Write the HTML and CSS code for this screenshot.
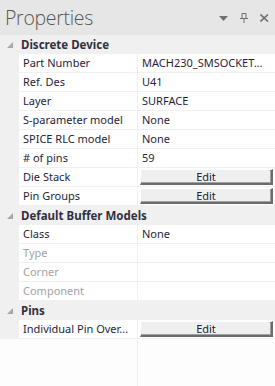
FILE: index.html
```html
<!DOCTYPE html>
<html>
<head>
	<title>Properties</title>
	<link rel="stylesheet" href="styles.css">
</head>
<body>
	<div class="panel">
		<div class="titlebar">
			<span class="title">Properties</span>
			<div class="tools">
				<svg class="tool-menu" width="10" height="6" viewBox="0 0 10 6"><path d="M0 0H9L4.5 5Z" fill="#717171"/></svg>
				<svg class="tool-pin" width="9" height="10" viewBox="0 0 9 10"><path d="M2 0.5H6V5.5M2 0.5V5.5M0 5.5H8M4 5.5V10" stroke="#717171" stroke-width="1" fill="none"/></svg>
				<svg class="tool-close" width="9" height="8" viewBox="0 0 9 8"><path d="M0.5 0.5L8 7.5M8 0.5L0.5 7.5" stroke="#717171" stroke-width="1.6"/></svg>
			</div>
		</div>

		<div class="grid">
			<div class="section">
				<svg class="toggle" width="6" height="6" viewBox="0 0 6 6"><path d="M6 0V6H0Z" fill="#a8a8a8"/></svg>
				<span>Discrete Device</span>
			</div>
			<div class="row"><div class="name">Part Number</div><div class="value">MACH230_SMSOCKET...</div></div>
			<div class="row"><div class="name">Ref. Des</div><div class="value">U41</div></div>
			<div class="row"><div class="name">Layer</div><div class="value">SURFACE</div></div>
			<div class="row"><div class="name">S-parameter model</div><div class="value">None</div></div>
			<div class="row"><div class="name">SPICE RLC model</div><div class="value">None</div></div>
			<div class="row"><div class="name"># of pins</div><div class="value">59</div></div>
			<div class="row"><div class="name">Die Stack</div><div class="value"><button class="edit">Edit</button></div></div>
			<div class="row"><div class="name">Pin Groups</div><div class="value"><button class="edit">Edit</button></div></div>

			<div class="section">
				<svg class="toggle" width="6" height="6" viewBox="0 0 6 6"><path d="M6 0V6H0Z" fill="#a8a8a8"/></svg>
				<span>Default Buffer Models</span>
			</div>
			<div class="row"><div class="name">Class</div><div class="value">None</div></div>
			<div class="row"><div class="name disabled">Type</div><div class="value"></div></div>
			<div class="row"><div class="name disabled">Corner</div><div class="value"></div></div>
			<div class="row"><div class="name disabled">Component</div><div class="value"></div></div>

			<div class="section">
				<svg class="toggle" width="6" height="6" viewBox="0 0 6 6"><path d="M6 0V6H0Z" fill="#a8a8a8"/></svg>
				<span>Pins</span>
			</div>
			<div class="row"><div class="name">Individual Pin Over...</div><div class="value"><button class="edit">Edit</button></div></div>
		</div>
		<div class="filler"></div>
	</div>
</body>
</html>
```

FILE: styles.css
```css
* {
	box-sizing: border-box;
}

body {
	margin: 0;
	background-color: #fdfdfd;
	font-family: "Noto Sans", "Liberation Sans", sans-serif;
	font-size: 11px;
	color: #1e1e38;
}

.panel {
	width: 275px;
	height: 386px;
	overflow: hidden;
}

.titlebar {
	height: 35px;
	background-color: #e6e6e6;
	display: flex;
	align-items: center;
	justify-content: space-between;
	padding: 0 6px 1px 5px;
}

.title {
	font-family: "Open Sans", "Noto Sans", sans-serif;
	font-weight: 300;
	font-size: 19.5px;
	color: #555555;
	letter-spacing: -0.3px;
}

.tools {
	display: flex;
	align-items: center;
	gap: 11px;
	padding-top: 1px;
}

.tool-menu {
	margin-top: 2px;
}

.grid {
	background-color: #f0f0f0;
}

.section {
	height: 19px;
	display: flex;
	align-items: center;
	font-weight: bold;
	font-size: 11.5px;
	color: #303040;
}

.toggle {
	margin: 1px 8px 0 7px;
}

.row {
	height: 19px;
	margin-left: 19px;
	display: flex;
	background-color: #ffffff;
	border-bottom: 1px solid #f0f0f0;
}

.name {
	width: 119px;
	flex-shrink: 0;
	padding: 0 0 0 4px;
	border-right: 1px solid #f0f0f0;
	line-height: 18px;
	white-space: nowrap;
}

.name.disabled {
	color: #a2a2a2;
}

.value {
	flex: 1;
	min-width: 0;
	padding: 0 2px 0 4px;
	line-height: 18px;
	white-space: nowrap;
	color: #2a1e3a;
}

.edit {
	display: block;
	width: 133px;
	height: 16px;
	margin: 1px 0 0 -2px;
	padding: 0;
	font-family: inherit;
	font-size: 11px;
	line-height: 12px;
	color: #1e1e38;
	background-color: #efefef;
	border-style: solid;
	border-width: 1px 2px 2px 1px;
	border-color: #ffffff #6b6b6b #6b6b6b #ffffff;
	box-shadow: inset -1px -1px 0 #a0a0a0;
}

.filler {
	width: 138px;
	height: 50px;
	border-right: 1px solid #f0f0f0;
}
```
